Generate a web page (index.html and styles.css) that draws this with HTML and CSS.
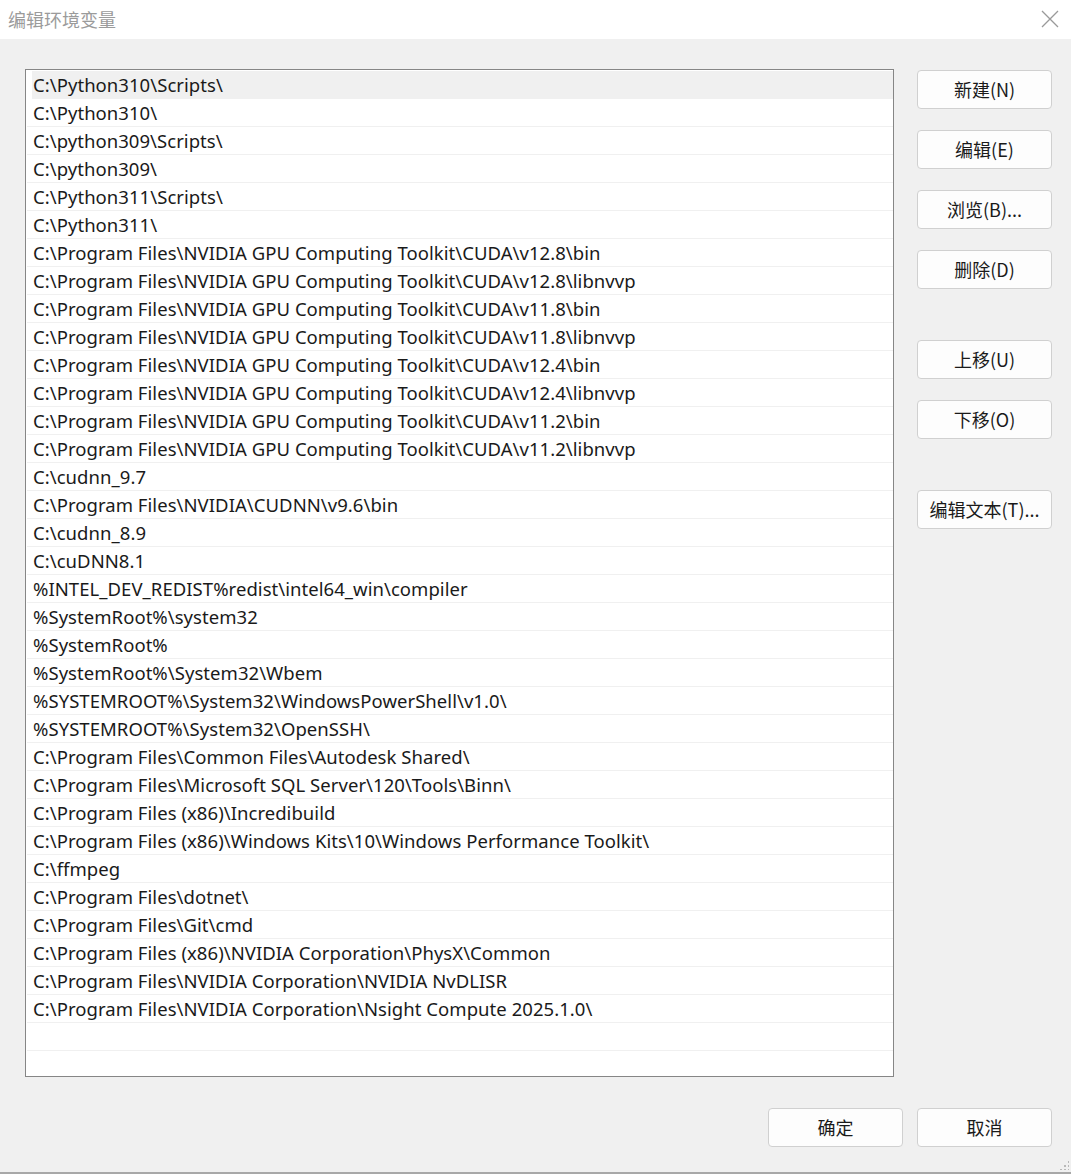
FILE: index.html
```html
<!DOCTYPE html>
<html lang="zh-CN">
<head>
<meta charset="utf-8">
<link rel="stylesheet" href="styles.css">
</head>
<body>
<div class="window">
  <div class="titlebar">
    <span class="title">编辑环境变量</span>
    <span class="close">
      <svg width="18" height="18" viewBox="0 0 18 18"><path d="M1 1 L17 17 M17 1 L1 17" stroke="#9a9a9a" stroke-width="1.3" fill="none"/></svg>
    </span>
  </div>
  <div class="content">
    <div class="main">
      <div class="list">
        <div class="row selected">C:\Python310\Scripts\</div>
        <div class="row">C:\Python310\</div>
        <div class="row">C:\python309\Scripts\</div>
        <div class="row">C:\python309\</div>
        <div class="row">C:\Python311\Scripts\</div>
        <div class="row">C:\Python311\</div>
        <div class="row">C:\Program Files\NVIDIA GPU Computing Toolkit\CUDA\v12.8\bin</div>
        <div class="row">C:\Program Files\NVIDIA GPU Computing Toolkit\CUDA\v12.8\libnvvp</div>
        <div class="row">C:\Program Files\NVIDIA GPU Computing Toolkit\CUDA\v11.8\bin</div>
        <div class="row">C:\Program Files\NVIDIA GPU Computing Toolkit\CUDA\v11.8\libnvvp</div>
        <div class="row">C:\Program Files\NVIDIA GPU Computing Toolkit\CUDA\v12.4\bin</div>
        <div class="row">C:\Program Files\NVIDIA GPU Computing Toolkit\CUDA\v12.4\libnvvp</div>
        <div class="row">C:\Program Files\NVIDIA GPU Computing Toolkit\CUDA\v11.2\bin</div>
        <div class="row">C:\Program Files\NVIDIA GPU Computing Toolkit\CUDA\v11.2\libnvvp</div>
        <div class="row">C:\cudnn_9.7</div>
        <div class="row">C:\Program Files\NVIDIA\CUDNN\v9.6\bin</div>
        <div class="row">C:\cudnn_8.9</div>
        <div class="row">C:\cuDNN8.1</div>
        <div class="row">%INTEL_DEV_REDIST%redist\intel64_win\compiler</div>
        <div class="row">%SystemRoot%\system32</div>
        <div class="row">%SystemRoot%</div>
        <div class="row">%SystemRoot%\System32\Wbem</div>
        <div class="row">%SYSTEMROOT%\System32\WindowsPowerShell\v1.0\</div>
        <div class="row">%SYSTEMROOT%\System32\OpenSSH\</div>
        <div class="row">C:\Program Files\Common Files\Autodesk Shared\</div>
        <div class="row">C:\Program Files\Microsoft SQL Server\120\Tools\Binn\</div>
        <div class="row">C:\Program Files (x86)\Incredibuild</div>
        <div class="row">C:\Program Files (x86)\Windows Kits\10\Windows Performance Toolkit\</div>
        <div class="row">C:\ffmpeg</div>
        <div class="row">C:\Program Files\dotnet\</div>
        <div class="row">C:\Program Files\Git\cmd</div>
        <div class="row">C:\Program Files (x86)\NVIDIA Corporation\PhysX\Common</div>
        <div class="row">C:\Program Files\NVIDIA Corporation\NVIDIA NvDLISR</div>
        <div class="row">C:\Program Files\NVIDIA Corporation\Nsight Compute 2025.1.0\</div>
        <div class="row"></div>
        <div class="row"></div>
      </div>
      <div class="side">
        <div class="group">
          <button class="btn">新建(N)</button>
          <button class="btn">编辑(E)</button>
          <button class="btn">浏览(B)...</button>
          <button class="btn">删除(D)</button>
        </div>
        <div class="group">
          <button class="btn">上移(U)</button>
          <button class="btn">下移(O)</button>
        </div>
        <div class="group">
          <button class="btn">编辑文本(T)...</button>
        </div>
      </div>
    </div>
    <div class="footer">
      <button class="btn">确定</button>
      <button class="btn">取消</button>
    </div>
    <div class="grip"></div>
  </div>
</div>
</body>
</html>
```

FILE: styles.css
```css
* { box-sizing: border-box; }
html, body {
  margin: 0;
  padding: 0;
  width: 1071px;
  height: 1174px;
  overflow: hidden;
  font-family: "Noto Sans", "Noto Sans CJK SC", sans-serif;
  color: #1a1a1a;
}
.window {
  width: 1071px;
  height: 1174px;
  display: flex;
  flex-direction: column;
  background: #f0f0f0;
}
.titlebar {
  height: 39px;
  background: #ffffff;
  display: flex;
  align-items: center;
  justify-content: space-between;
  padding: 0 12px 2px 8px;
  flex: none;
}
.title {
  font-size: 18px;
  color: #9b9b9b;
  font-family: "Noto Sans CJK SC", sans-serif;
}
.close {
  display: flex;
  width: 18px;
  height: 18px;
}
.content {
  position: relative;
  flex: 1;
  display: flex;
  flex-direction: column;
  border-bottom: 2px solid #a8a8a8;
}
.main {
  display: flex;
  padding: 30px 0 0 25px;
  gap: 23px;
}
.list {
  width: 869px;
  height: 1008px;
  background: #ffffff;
  border: 1px solid #868686;
  padding: 1px 0 0 1px;
  overflow: hidden;
}
.row {
  height: 28px;
  line-height: 27px;
  font-size: 18.5px;
  padding-left: 6px;
  border-bottom: 1px solid #f0f0f0;
  white-space: nowrap;
  letter-spacing: 0.05px;
}
.row.selected {
  background: #f0f0f0;
  margin-left: 5px;
  padding-left: 1px;
}
.side {
  display: flex;
  flex-direction: column;
  padding-top: 1px;
  gap: 51px;
}
.group {
  display: flex;
  flex-direction: column;
  gap: 21px;
}
.btn {
  width: 135px;
  height: 39px;
  background: #fdfdfd;
  border: 1px solid #d0d0d0;
  border-radius: 4px;
  font-family: "Noto Sans CJK SC", "Noto Sans", sans-serif;
  font-size: 18px;
  color: #1a1a1a;
  padding: 0;
  line-height: 37px;
}
.footer {
  display: flex;
  justify-content: flex-end;
  gap: 14px;
  padding: 31px 19px 0 0;
}
.grip {
  position: absolute;
  right: 2px;
  bottom: 2px;
  width: 10px;
  height: 10px;
  background:
    radial-gradient(circle, #b8b8b8 1px, transparent 1.2px) 0 0 / 4px 4px;
  clip-path: polygon(100% 0, 100% 100%, 0 100%);
}
```
